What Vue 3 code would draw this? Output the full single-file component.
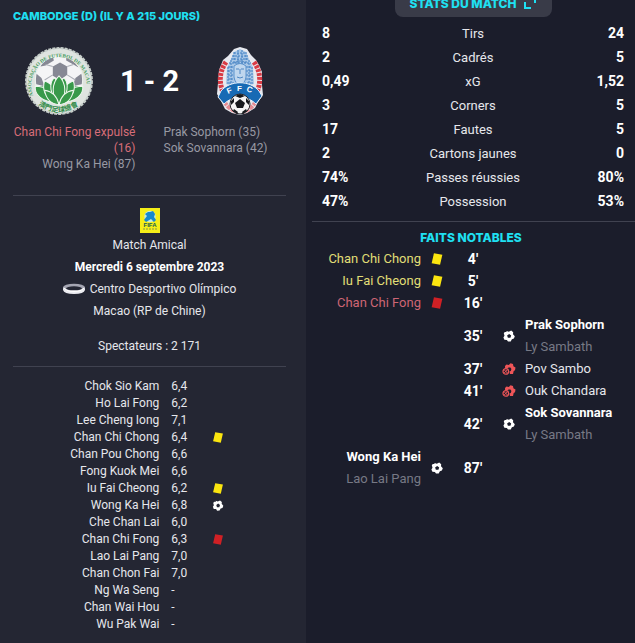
<script setup>
import { ref } from 'vue';

// scorers and sent off players under the badges
const homeSummary = [
    { text: 'Chan Chi Fong expulsé (16)', sentOff: true },
    { text: 'Wong Ka Hei (87)', sentOff: false },
];
const awaySummary = ['Prak Sophorn (35)', 'Sok Sovannara (42)'];

// player ratings
const players = ref([
    { name: 'Chok Sio Kam', rating: '6,4' },
    { name: 'Ho Lai Fong', rating: '6,2' },
    { name: 'Lee Cheng Iong', rating: '7,1' },
    { name: 'Chan Chi Chong', rating: '6,4', icon: 'yellow' },
    { name: 'Chan Pou Chong', rating: '6,6' },
    { name: 'Fong Kuok Mei', rating: '6,6' },
    { name: 'Iu Fai Cheong', rating: '6,2', icon: 'yellow' },
    { name: 'Wong Ka Hei', rating: '6,8', icon: 'goal' },
    { name: 'Che Chan Lai', rating: '6,0' },
    { name: 'Chan Chi Fong', rating: '6,3', icon: 'red' },
    { name: 'Lao Lai Pang', rating: '7,0' },
    { name: 'Chan Chon Fai', rating: '7,0' },
    { name: 'Ng Wa Seng', rating: '-' },
    { name: 'Chan Wai Hou', rating: '-' },
    { name: 'Wu Pak Wai', rating: '-' },
]);

const stats = ref([
    { label: 'Tirs', home: '8', away: '24' },
    { label: 'Cadrés', home: '2', away: '5' },
    { label: 'xG', home: '0,49', away: '1,52' },
    { label: 'Corners', home: '3', away: '5' },
    { label: 'Fautes', home: '17', away: '5' },
    { label: 'Cartons jaunes', home: '2', away: '0' },
    { label: 'Passes réussies', home: '74%', away: '80%' },
    { label: 'Possession', home: '47%', away: '53%' },
]);

const events = ref([
    { side: 'home', minute: "4'", type: 'yellow', player: 'Chan Chi Chong' },
    { side: 'home', minute: "5'", type: 'yellow', player: 'Iu Fai Cheong' },
    { side: 'home', minute: "16'", type: 'red', player: 'Chan Chi Fong' },
    { side: 'away', minute: "35'", type: 'goal', player: 'Prak Sophorn', assist: 'Ly Sambath' },
    { side: 'away', minute: "37'", type: 'missed', player: 'Pov Sambo' },
    { side: 'away', minute: "41'", type: 'missed', player: 'Ouk Chandara' },
    { side: 'away', minute: "42'", type: 'goal', player: 'Sok Sovannara', assist: 'Ly Sambath' },
    { side: 'home', minute: "87'", type: 'goal', player: 'Wong Ka Hei', assist: 'Lao Lai Pang' },
]);
</script>

<template>
    <!-- shared icons -->
    <svg class="sprite" aria-hidden="true">
        <symbol id="card" viewBox="1 0.5 10 11">
            <path d="M3.2 .7 10.9 2 8.8 11.3 1.1 9.8Z" fill="currentColor" />
        </symbol>
        <symbol id="ball" viewBox="0 0 12 12">
            <path fill="currentColor" fill-rule="evenodd" d="M3.6 .9 5.8 1.7 8.2 .5 10.2 2.2 10 4.2 11.8 6.2 10.9 8.6 8.9 9.3 7.7 11.5 5 11.6 3.9 9.9 1.4 9.7 .4 7.4 1.5 5.7 .8 3.3 1.8 2 3.4 2.1ZM6.2 3.9 4.1 5.4 4.9 7.8 7.4 7.8 8.2 5.4Z" />
        </symbol>
        <symbol id="missed" viewBox="0 0 14 12">
            <path fill="currentColor" d="M4.5 1.6 6.8 2 8.5 .3 11 1 11.4 3.2 13.5 4.5 13 7.3 11.7 8.1 11 10.9 8 11 7.4 8.6 8.8 7.9 9.4 6 8.4 4.6 6.6 4.4 5.5 5.2 3.1 5 3 3Z" />
            <circle cx="3.8" cy="8.4" r="2.8" fill="none" stroke="currentColor" stroke-width="1.2" />
            <path d="m2 6.6 3.6 3.6m0-3.6L2 10.2" stroke="currentColor" stroke-width="1" />
        </symbol>
    </svg>

    <main class="match">
        <section class="summary">
            <h1>CAMBODGE (D) (IL Y A 215 JOURS)</h1>

            <div class="score">
                <svg class="badge" viewBox="0 0 68 68" role="img" aria-label="Macao">
                    <defs>
                        <path id="macau-top" d="M9 48A27 27 0 1 1 59 48" />
                        <path id="macau-bottom" d="M14 57Q34 73 58 54" />
                        <clipPath id="macau-clip"><circle cx="34" cy="33" r="23" /></clipPath>
                    </defs>
                    <circle cx="34" cy="34" r="32" fill="#dfe4e0" stroke="#c6ceca" stroke-width="2" stroke-dasharray="3 1" />
                    <g clip-path="url(#macau-clip)">
                        <path fill="#f4f4f6" d="M10 9h48v32H10z" />
                        <path fill="#868894" d="m28 20 7-4 7 4v8l-7 5-7-4ZM18 15l10-5 1 4-8 5-5 1ZM41 9l10 6 2 6-5-3-7-4ZM11 26l6 5 3 8-9-2ZM57 26l-7 5-3 8 10-2Z" />
                        <path fill="none" stroke="#aaadb5" d="m28 20-7-2m21 2 6-2M28 28l-8 5m22-5 8 5M35 33v7" />
                        <path fill="#38994a" d="M10 39h48v20H10z" />
                    </g>
                    <circle cx="34" cy="33" r="23" fill="none" stroke="#eef2ee" stroke-width="1" />
                    <g fill="#38994a" stroke="#eef7ee" stroke-width="1">
                        <path d="M34 55C16 55 10 46 11 39c9 0 19 5 23 16ZM34 55c18 0 24-9 23-16-9 0-19 5-23 16Z" />
                        <path d="M34 56C18 51 18 40 20 34c9 3 14 12 14 22ZM34 56c16-5 16-16 14-22-9 3-14 12-14 22Z" />
                        <path d="M34 56C25 47 24 37 29 31c4 2 7 9 5 25ZM34 56c9-9 10-19 5-25-4 2-7 9-5 25Z" />
                        <path d="M34 57C26 48 27 36 34 29c7 7 8 19 0 28Z" />
                        <path d="M34 57C24 56 21 49 20 43c7 1 12 5 14 14ZM34 57c10-1 13-8 14-14-7 1-12 5-14 14Z" />
                    </g>
                    <text class="macau-name"><textPath href="#macau-top">ASSOCIAÇÃO DE FUTEBOL DE MACAU</textPath></text>
                    <text class="macau-cjk"><textPath href="#macau-bottom">澳門足球總會</textPath></text>
                </svg>

                <p class="result">1 - 2</p>

                <svg class="badge" viewBox="0 0 48 70" role="img" aria-label="Cambodge">
                    <path fill="#e7e9ef" d="m18 3 6-2 7 2 4 6 5 5 3 5 3 7v13l1 10-5 7-3 6-8 5-7 2-8-2-7-4-4-8-4-7L2 37l1-13 4-10 5-4Z" />
                    <path fill="none" stroke="#d93b45" stroke-width="5" stroke-dasharray="3 1" d="M10 16C3 26 3 37 7 46m31-30c7 10 7 21 3 30" />
                    <path fill="none" stroke="#e58b91" stroke-width="4" stroke-dasharray="4 1" d="M7 51c2 8 6 12 14 15m20-15c-2 8-6 12-14 15" />
                    <path fill="#a9c7e7" d="m18 6 6-3 6 3 3 7 4 8 1 17-14 4-14-4 1-16 4-9Z" />
                    <g fill="none" stroke="#3f7fc2" stroke-width="1" stroke-dasharray="2 1">
                        <path d="M18 7h12M16 10h16M15 13h18M13 17h22M12 21h24M12 25h24M12 29h24M12 33h24M13 37h22M18 6v11M22 4v14M26 4v14M30 6v11M15 14v24M33 14v24M12 21v17M36 21v17" />
                    </g>
                    <path fill="#bfd6ee" stroke="#5b92cc" d="M18 20q6-5 12 0v11q-1 7-6 7t-6-7Z" />
                    <path fill="none" stroke="#5088c4" stroke-width="1" d="M20 23h3m2 0h3m-4 0v5m-3 3q3 2 6 0M18 17q6-4 12 0" />
                    <path fill="#176ab4" stroke="#e8f1fa" stroke-width="1" d="M5 45C14 34 34 34 43 45l3 5-6 8C31 49 17 49 8 58l-6-7Z" />
                    <g class="ffc">
                        <text x="12" y="48" transform="rotate(-22 12 48)">F</text>
                        <text x="21" y="45">F</text>
                        <text x="30" y="45" transform="rotate(20 30 45)">C</text>
                    </g>
                    <circle cx="24" cy="58" r="10" fill="#f5f5f5" stroke="#24262b" />
                    <path fill="#17191d" d="m24 53 5 4-2 5h-6l-2-5ZM19 50l5-2 5 2-5 2ZM15 55l3-3v4l-3 3ZM33 55l-3-3v4l3 3ZM18 63l4 3-1 2-4-3ZM30 63l-4 3 1 2 4-3Z" />
                </svg>
            </div>

            <div class="scorers">
                <ul class="home">
                    <li v-for="s in homeSummary" :key="s.text" :class="{ 'sent-off': s.sentOff }">{{ s.text }}</li>
                </ul>
                <ul>
                    <li v-for="s in awaySummary" :key="s">{{ s }}</li>
                </ul>
            </div>

            <div class="info">
                <svg class="fifa" viewBox="0 0 20 25" role="img" aria-label="FIFA">
                    <path fill="#f5ee18" d="M0 0h20v25H0z" />
                    <circle cx="10" cy="8.5" r="5.7" fill="#c6e8dc" />
                    <path fill="#1588ce" d="m10 4 3-1 2 3-1 3 2 3-2 2-3-3-5 3-2-2 3-4-2-2 3-2Z" />
                    <text x="10" y="19" class="fifa-name">FIFA</text>
                    <path stroke="#84984d" stroke-width="1" stroke-dasharray="2 1" d="M3 21h14" />
                </svg>
                <p class="competition">Match Amical</p>
                <p class="date">Mercredi 6 septembre 2023</p>
                <p class="stadium">
                    <svg viewBox="0 0 22 12" aria-hidden="true">
                        <path fill="#ececf2" d="M0 4v3q1 4 11 4t11-4V4Z" />
                        <ellipse cx="11" cy="4.5" rx="11" ry="3.8" fill="#a4a5b2" />
                        <ellipse cx="11" cy="5.3" rx="8" ry="2" fill="#242633" />
                        <path fill="none" stroke="#fff" stroke-width="1.4" d="M1 5q2 3.3 10 3.3T21 5" />
                    </svg>
                    Centro Desportivo Olímpico
                </p>
                <p class="city">Macao (RP de Chine)</p>
                <p>Spectateurs : 2 171</p>
            </div>

            <table class="ratings">
                <tbody>
                    <tr v-for="p in players" :key="p.name">
                        <th scope="row">{{ p.name }}</th>
                        <td>{{ p.rating }}</td>
                        <td>
                            <svg v-if="p.icon" class="icon small" :class="p.icon">
                                <use :href="p.icon === 'goal' ? '#ball' : '#card'" />
                            </svg>
                        </td>
                    </tr>
                </tbody>
            </table>
        </section>

        <section class="details">
            <button type="button" class="stats-button">
                STATS DU MATCH
                <svg viewBox="0 0 12 12" aria-hidden="true">
                    <path fill="none" stroke="currentColor" stroke-width="2" d="M1 5v6h6M6 1h5v5" />
                </svg>
            </button>

            <table class="stats">
                <tbody>
                    <tr v-for="s in stats" :key="s.label">
                        <td>{{ s.home }}</td>
                        <th scope="row">{{ s.label }}</th>
                        <td>{{ s.away }}</td>
                    </tr>
                </tbody>
            </table>

            <h2>FAITS NOTABLES</h2>

            <ul class="events">
                <li v-for="e in events" :key="e.minute" :class="[e.side, e.type]">
                    <div class="names">
                        <span class="player">{{ e.player }}</span>
                        <span v-if="e.assist" class="assist">{{ e.assist }}</span>
                    </div>
                    <svg class="icon" :class="e.type">
                        <use :href="e.type === 'goal' ? '#ball' : e.type === 'missed' ? '#missed' : '#card'" />
                    </svg>
                    <span class="minute">{{ e.minute }}</span>
                </li>
            </ul>
        </section>
    </main>
</template>

<style>
body {
    margin: 0;
    background: #1b1d2b;
}
</style>

<style scoped>
.sprite {
    position: absolute;
    width: 0;
    height: 0;
}

.match {
    display: grid;
    grid-template-columns: 306fr 329fr;
    min-height: 100vh;
    overflow: hidden;
    color: #e6e7ec;
    font-family: Roboto, "Liberation Sans", sans-serif;
    font-size: 12px;
}

h1,
h2,
p,
ul {
    margin: 0;
    padding: 0;
}

ul {
    list-style: none;
}

table {
    width: 100%;
    border-collapse: collapse;
}

th,
td {
    padding: 0;
    font-weight: 400;
}

.summary {
    padding: 8px 20px 0 13px;
    background: #242633;
}

h1,
h2 {
    color: #1fe0f2;
    font-family: Inter, sans-serif;
    font-size: 11px;
    font-weight: 800;
    line-height: 16px;
}

.score {
    display: grid;
    grid-template-columns: 1fr 90px 1fr;
    align-items: center;
    justify-items: center;
    height: 70px;
    margin-top: 22px;
}

.badge {
    height: 70px;
}

.result {
    color: #fff;
    font-size: 29px;
    font-weight: 700;
}

.macau-name {
    fill: #3f9a5a;
    font: 700 5px "Liberation Serif", serif;
}

.macau-cjk {
    fill: #2f8a48;
    font: 700 7px "Noto Sans CJK TC", sans-serif;
}

.ffc {
    fill: #fff;
    font: 700 8px "Liberation Sans", sans-serif;
}

.scorers {
    display: grid;
    grid-template-columns: 1fr 1fr;
    gap: 28px;
    padding: 8px 0 23px;
    border-bottom: 1px solid #404250;
    color: #9899a3;
    line-height: 16px;
}

.home {
    text-align: right;
}

.sent-off {
    color: #d76d78;
}

.info {
    display: flex;
    flex-direction: column;
    align-items: center;
    padding: 12px 0 9px;
    border-bottom: 1px solid #404250;
    line-height: 22px;
}

.fifa {
    width: 20px;
    height: 25px;
    margin-bottom: 1px;
}

.fifa-name {
    fill: #145b54;
    font: 900 6px "Liberation Sans", sans-serif;
    text-anchor: middle;
}

.date {
    color: #fff;
    font-weight: 700;
}

.stadium {
    display: flex;
    align-items: center;
    gap: 5px;
}

.stadium svg {
    width: 22px;
    height: 12px;
}

.city {
    margin-bottom: 13px;
}

.ratings {
    margin-top: 11px;
    table-layout: fixed;
    line-height: 17px;
}

.ratings th {
    width: 58%;
    padding-right: 12px;
    box-sizing: border-box;
    text-align: right;
}

.ratings td:nth-child(2) {
    width: 41px;
}

.ratings tr {
    height: 17px;
}

.icon {
    display: block;
    width: 14px;
    height: 12px;
    color: #fff;
}

.icon.small {
    width: 12px;
    height: 11px;
}

.icon.yellow {
    color: #fbe50f;
}

.icon.red {
    color: #d02025;
}

.icon.missed {
    color: #ee5558;
}

.details {
    padding: 0 11px 0 16px;
    background: #1b1d2b;
    font-size: 13px;
}

.stats-button {
    display: flex;
    align-items: center;
    justify-content: center;
    gap: 8px;
    width: 157px;
    height: 28px;
    margin: -11px auto 4px;
    padding: 0;
    border: 0;
    border-radius: 8px;
    background: #393b48;
    color: #1fe0f2;
    font: 800 12px Inter, sans-serif;
    cursor: pointer;
}

.stats-button svg {
    width: 12px;
    height: 12px;
}

.stats tr {
    height: 24px;
}

.stats td {
    width: 25%;
    color: #fff;
    font-size: 14px;
    font-weight: 700;
}

.stats td:last-child {
    text-align: right;
}

h2 {
    margin: 8px -11px 0 -10px;
    padding: 8px 5px 2px 0;
    border-top: 1px solid #404250;
    font-size: 12px;
    text-align: center;
}

.events li {
    display: grid;
    grid-template-columns: 1fr 32px 40px 32px 1fr;
    align-items: center;
    justify-items: center;
    line-height: 22px;
    white-space: nowrap;
}

.names {
    display: flex;
    flex-direction: column;
    grid-column: 5;
    grid-row: 1;
    justify-self: start;
}

.events .icon {
    grid-column: 4;
    grid-row: 1;
}

.minute {
    grid-column: 3;
    grid-row: 1;
    color: #fff;
    font-size: 14px;
    font-weight: 700;
}

.events .home .names {
    grid-column: 1;
    justify-self: end;
}

.events .home .icon {
    grid-column: 2;
}

.goal .player {
    color: #fff;
    font-weight: 700;
}

.yellow .player {
    color: #e1de76;
}

.red .player {
    color: #ce6574;
}

.assist {
    color: #777985;
}
</style>
